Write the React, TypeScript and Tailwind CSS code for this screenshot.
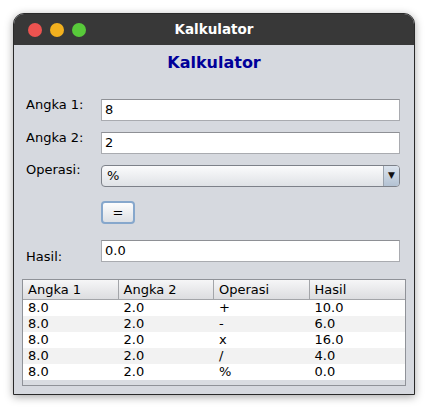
import React from 'react'

const rows = [
  ['8.0', '2.0', '+', '10.0'],
  ['8.0', '2.0', '-', '6.0'],
  ['8.0', '2.0', 'x', '16.0'],
  ['8.0', '2.0', '/', '4.0'],
  ['8.0', '2.0', '%', '0.0'],
]

function Field({ value }: { value: string }) {
  return (
    <div className="w-[299px] h-[22px] bg-white border border-[#a9abb0] border-t-[#8e9095] flex items-center pl-[3px] text-[13px] text-black">
      {value}
    </div>
  )
}

export default function App() {
  return (
    <div className="w-[428px] h-[408px] bg-white pt-[13px] pl-[13px] font-['DejaVu_Sans',sans-serif]">
      <div className="w-[402px] h-[382px] rounded-t-[11px] bg-[#d6d9df] border border-[#2a2a2a] shadow-[0_2px_8px_rgba(0,0,0,0.35)] flex flex-col overflow-hidden">
        {/* Title bar */}
        <div className="relative h-[31px] bg-[#383838] flex items-center shrink-0">
          <div className="flex items-center gap-[8px] pl-[14px]">
            <span className="w-[14px] h-[14px] rounded-full bg-[#ec5350]" />
            <span className="w-[14px] h-[14px] rounded-full bg-[#f2b01e]" />
            <span className="w-[14px] h-[14px] rounded-full bg-[#58c93a]" />
          </div>
          <div className="absolute inset-0 flex items-center justify-center text-white font-bold text-[13.5px]">
            Kalkulator
          </div>
        </div>

        {/* Content */}
        <div className="flex flex-col pt-[8px]">
          <div className="h-[20px] flex items-center justify-center text-[#000099] font-bold text-[16px]">
            Kalkulator
          </div>

          <div className="flex flex-col pl-[12px] mt-[26px]">
            <div className="flex items-start h-[22px]">
              <span className="w-[75px] text-[13px] text-black leading-[16px] -mt-[2px]">Angka 1:</span>
              <Field value="8" />
            </div>
            <div className="flex items-start h-[22px] mt-[11px]">
              <span className="w-[75px] text-[13px] text-black leading-[16px] -mt-[2px]">Angka 2:</span>
              <Field value="2" />
            </div>
            <div className="flex items-start h-[22px] mt-[11px]">
              <span className="w-[75px] text-[13px] text-black leading-[16px] -mt-[3px]">Operasi:</span>
              <div className="w-[299px] h-[22px] rounded-[4px] border border-[#7d8189] bg-gradient-to-b from-[#fbfbfc] to-[#dfe2e6] flex items-center overflow-hidden">
                <span className="flex-1 pl-[5px] text-[13px] text-black">%</span>
                <span className="w-[16px] h-full border-l border-[#9aa3ae] bg-gradient-to-b from-[#dce4ee] to-[#b3c2d3] flex items-center justify-center text-[9px] text-[#111]">
                  ▼
                </span>
              </div>
            </div>
            <div className="flex h-[22px] mt-[14px]">
              <span className="w-[75px]" />
              <div className="w-[34px] h-[23px] rounded-[4px] border-2 border-[#86a7cc] bg-gradient-to-b from-[#fdfdfd] to-[#dde0e5] flex items-center justify-center text-[13px] text-black">
                =
              </div>
            </div>
            <div className="flex items-end h-[22px] mt-[17px]">
              <span className="w-[75px] text-[13px] text-black leading-[16px] -mb-[3px]">Hasil:</span>
              <Field value="0.0" />
            </div>
          </div>

          {/* Table */}
          <div className="mx-[8px] mt-[17px] h-[107px] border border-[#8f9298] bg-[#d9dce1] flex flex-col">
            <div className="h-[20px] flex bg-gradient-to-b from-[#f6f6f7] to-[#dcdde0] border-b border-[#a3a5a9] text-[13px] text-black">
              {['Angka 1', 'Angka 2', 'Operasi', 'Hasil'].map((h, i) => (
                <div
                  key={h}
                  className={`w-[96px] flex items-center pl-[5px] ${i < 3 ? 'border-r border-[#a3a5a9]' : ''}`}
                >
                  {h}
                </div>
              ))}
            </div>
            {rows.map((r, i) => (
              <div key={i} className={`h-[16px] flex text-[13px] text-black ${i % 2 ? 'bg-[#f2f2f2]' : 'bg-white'}`}>
                {r.map((c, j) => (
                  <div key={j} className="w-[96px] pl-[5px] leading-[16px]">
                    {c}
                  </div>
                ))}
              </div>
            ))}
          </div>
        </div>
      </div>
    </div>
  )
}
